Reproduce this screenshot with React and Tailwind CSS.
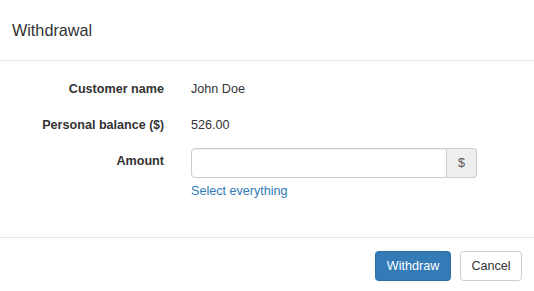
export default function App() {
  return (
    <div className="w-[534px] h-[291px] bg-white text-[#333] flex flex-col" style={{ fontFamily: '"Liberation Sans", Arial, sans-serif' }}>
      <div className="h-[61px] shrink-0 border-b border-[#e5e5e5] px-[12px] flex items-center">
        <h4 className="text-[16.2px] leading-[23px] font-normal">Withdrawal</h4>
      </div>
      <div className="h-[176px] shrink-0 pt-[19px] text-[12.6px] leading-[18px]">
        <div className="flex gap-[27px]">
          <div className="w-[164px] text-right font-bold">Customer name</div>
          <div>John Doe</div>
        </div>
        <div className="flex gap-[27px] mt-[18px]">
          <div className="w-[164px] text-right font-bold">
            Personal balance <span className="text-[12px]">($)</span>
          </div>
          <div>526.00</div>
        </div>
        <div className="flex gap-[27px] mt-[14px] items-start">
          <div className="w-[164px] text-right font-bold pt-[4px]">Amount</div>
          <div className="flex flex-col">
            <div className="flex w-[286px] h-[30px]">
              <input type="text" className="flex-1 min-w-0 h-full border border-[#ccc] rounded-l-[4px] px-[11px] shadow-[inset_0_1px_1px_rgba(0,0,0,0.075)] outline-none" />
              <span className="w-[30px] h-full flex items-center justify-center bg-[#eee] border border-l-0 border-[#ccc] rounded-r-[4px] text-[#555]">$</span>
            </div>
            <a className="text-[#337ab7] mt-[4px] cursor-pointer">Select everything</a>
          </div>
        </div>
      </div>
      <div className="border-t border-[#e5e5e5] flex justify-end gap-[9px] pt-[13px] px-[12px]">
        <button className="h-[30px] w-[76px] text-[12.6px] text-white bg-[#337ab7] border border-[#2e6da4] rounded-[3.5px]">Withdraw</button>
        <button className="h-[30px] w-[62px] text-[12.6px] text-[#333] bg-white border border-[#ccc] rounded-[3.5px]">Cancel</button>
      </div>
    </div>
  );
}
